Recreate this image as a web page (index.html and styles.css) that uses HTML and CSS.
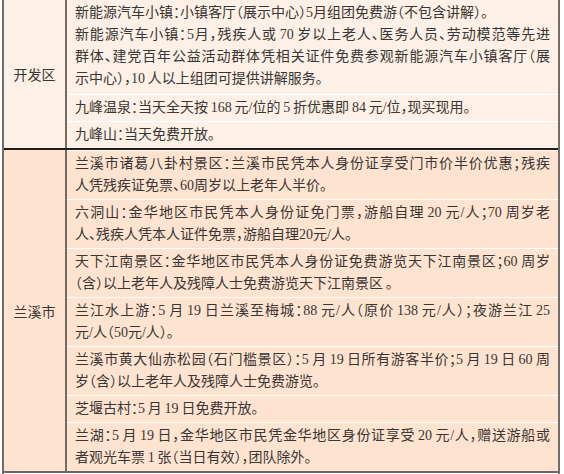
FILE: index.html
```html
<!DOCTYPE html>
<html lang="zh-CN">
<head>
<meta charset="utf-8">
<title>景区优惠</title>
<link rel="stylesheet" href="styles.css">
</head>
<body>
<div class="table">
  <section class="group group-light">
    <div class="label">开发区</div>
    <div class="items">
      <div class="item item-first">
        <p><span class="ln last">新能源汽车小镇：小镇客厅（展示中心）5月组团免费游（不包含讲解）。</span></p>
        <p>
          <span class="ln">新能源汽车小镇：5月，残疾人或&thinsp;70&thinsp;岁以上老人、医务人员、劳动模范等先进</span>
          <span class="ln">群体、建党百年公益活动群体凭相关证件免费参观新能源汽车小镇客厅（展</span>
          <span class="ln last">示中心），10&thinsp;人以上组团可提供讲解服务。</span>
        </p>
      </div>
      <div class="item"><p><span class="ln last">九峰温泉：当天全天按&thinsp;168&thinsp;元/位的&thinsp;5&thinsp;折优惠即&thinsp;84&thinsp;元/位，现买现用。</span></p></div>
      <div class="item"><p><span class="ln last">九峰山：当天免费开放。</span></p></div>
    </div>
  </section>
  <section class="group group-warm">
    <div class="label">兰溪市</div>
    <div class="items">
      <div class="item">
        <p>
          <span class="ln">兰溪市诸葛八卦村景区：兰溪市民凭本人身份证享受门市价半价优惠；残疾</span>
          <span class="ln last">人凭残疾证免票、60周岁以上老年人半价。</span>
        </p>
      </div>
      <div class="item">
        <p>
          <span class="ln">六洞山：金华地区市民凭本人身份证免门票，游船自理&thinsp;20&thinsp;元/人；70&thinsp;周岁老</span>
          <span class="ln last">人、残疾人凭本人证件免票，游船自理20元/人。</span>
        </p>
      </div>
      <div class="item">
        <p>
          <span class="ln">天下江南景区：金华地区市民凭本人身份证免费游览天下江南景区；60&thinsp;周岁</span>
          <span class="ln last">（含）以上老年人及残障人士免费游览天下江南景区&thinsp;。</span>
        </p>
      </div>
      <div class="item">
        <p>
          <span class="ln">兰江水上游：5&thinsp;月&thinsp;19&thinsp;日兰溪至梅城：88&thinsp;元/人（原价&thinsp;138&thinsp;元/人）；夜游兰江&thinsp;25</span>
          <span class="ln last">元/人（50元/人）。</span>
        </p>
      </div>
      <div class="item">
        <p>
          <span class="ln">兰溪市黄大仙赤松园（石门槛景区）：5&thinsp;月&thinsp;19&thinsp;日所有游客半价；5&thinsp;月&thinsp;19&thinsp;日&thinsp;60&thinsp;周</span>
          <span class="ln last">岁（含）以上老年人及残障人士免费游览。</span>
        </p>
      </div>
      <div class="item"><p><span class="ln last">芝堰古村：5&thinsp;月&thinsp;19&thinsp;日免费开放。</span></p></div>
      <div class="item">
        <p>
          <span class="ln">兰湖：5&thinsp;月&thinsp;19&thinsp;日，金华地区市民凭金华地区身份证享受&thinsp;20&thinsp;元/人，赠送游船或</span>
          <span class="ln last">者观光车票&thinsp;1&thinsp;张（当日有效），团队除外。</span>
        </p>
      </div>
    </div>
  </section>
  <section class="group group-light group-next">
    <div class="label"></div>
    <div class="items">
      <div class="item"><p><span class="ln last">&nbsp;</span></p></div>
    </div>
  </section>
</div>
</body>
</html>
```
FILE: styles.css
```css
html, body {
  margin: 0;
  padding: 0;
  background: #ffffff;
}

body {
  font-family: "Liberation Serif", "Noto Sans CJK SC", serif;
  font-size: 14px;
  color: #3a3633;
  font-feature-settings: "halt";
  text-spacing-trim: space-all;
}

.table {
  margin-left: 2px;
  width: 558px;
  box-sizing: border-box;
  border-left: 2px solid #756c66;
  border-right: 2px solid #756c66;
}

.group {
  display: grid;
  grid-template-columns: 63px 1fr;
}

.group-light {
  background: #fdf0e6;
}

.group-warm {
  background: #fde3d0;
  border-top: 2px solid #1f1c1a;
  border-bottom: 2px solid #6f6862;
}

.group-next {
  margin-top: 1px;
  border-top: 1px solid #b8b0aa;
}

.label {
  border-right: 2px solid #756c66;
  display: flex;
  align-items: center;
  justify-content: center;
  font-family: "Noto Sans CJK SC", sans-serif;
  font-size: 14px;
}

.items {
  display: flex;
  flex-direction: column;
}

.item {
  padding: 2px 8px 2px 8px;
  border-top: 1px solid #ffffff;
}

.item-first {
  border-top: none;
  padding-bottom: 4px;
}

.item p {
  margin: 0;
}

.ln {
  display: block;
  line-height: 22px;
  height: 22px;
  white-space: nowrap;
  text-align: justify;
  text-align-last: justify;
}

.ln.last {
  text-align: left;
  text-align-last: left;
}
```
